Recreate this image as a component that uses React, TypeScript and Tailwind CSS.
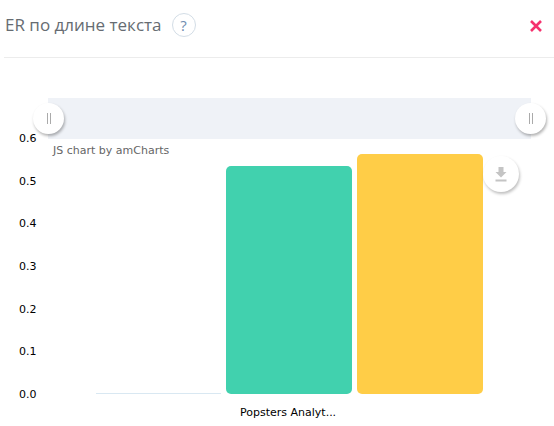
export default function App() {
  const ticks = ["0.6", "0.5", "0.4", "0.3", "0.2", "0.1", "0.0"];
  return (
    <div className="w-[554px] h-[426px] bg-white overflow-hidden relative">
      <header className="h-[58px] ml-1 mr-0 border-b border-[#ececec] flex items-start">
        <h2 className="mt-[13px] ml-px text-[17px] leading-6 font-normal text-[#666c72] font-['Open_Sans',sans-serif]">ER по длине текста</h2>
        <span className="mt-[13px] ml-[10px] w-6 h-6 rounded-full border border-[#d3dde6] text-[#6f8cb0] text-[15px] leading-[22px] text-center font-['Open_Sans',sans-serif]">?</span>
        <svg className="ml-auto mt-[20px] mr-[12px]" width="12" height="12" viewBox="0 0 12 12">
          <path d="M1 1 L11 11 M11 1 L1 11" stroke="#f5326e" strokeWidth="2.6" />
        </svg>
      </header>

      <div className="mt-10 ml-12 mr-[23px] h-[41px] bg-[#eff2f7]" />

      <div className="relative flex h-[255px] mt-0 font-['DejaVu_Sans',sans-serif] text-[11px]">
        <div className="w-[38px] h-[255px] -mt-[0px] relative">
          <div className="flex flex-col justify-between h-[270px] -mt-[7px] pl-[19px] leading-[14px] text-black">
            {ticks.map((t) => (
              <span key={t}>{t}</span>
            ))}
          </div>
        </div>
        <div className="flex items-end gap-[5px] ml-[58px] h-[255px]">
          <div className="w-[125px] h-px bg-[#d9e8f2]" />
          <div className="w-[126px] h-[228px] bg-[#41d1ae] rounded-[5px]" />
          <div className="w-[126px] h-[240px] bg-[#ffcd47] rounded-[5px]" />
        </div>
        <span className="absolute left-[53px] top-[5px] text-[#666] text-[11px] leading-[14px]">JS chart by amCharts</span>
        <span className="absolute left-[240px] top-[267px] text-black text-[11px] leading-[14px]">Popsters Analyt...</span>
      </div>

      <div className="absolute left-[33px] top-[103px] w-[31px] h-[31px] rounded-full bg-white shadow-[1px_2px_3px_rgba(0,0,0,0.3)] flex items-center justify-center gap-[2px]">
        <span className="w-px h-[11px] bg-[#aaa]" />
        <span className="w-px h-[11px] bg-[#aaa]" />
      </div>
      <div className="absolute left-[515px] top-[103px] w-[31px] h-[31px] rounded-full bg-white shadow-[1px_2px_3px_rgba(0,0,0,0.3)] flex items-center justify-center gap-[2px]">
        <span className="w-px h-[11px] bg-[#aaa]" />
        <span className="w-px h-[11px] bg-[#aaa]" />
      </div>
      <div className="absolute left-[483px] top-[156px] w-9 h-9 rounded-full bg-white shadow-[1px_2px_3px_rgba(0,0,0,0.25)] flex items-center justify-center">
        <svg width="12" height="15" viewBox="0 0 12 15">
          <path d="M3.5 0 H8.5 V5 H11.5 L6 10.5 L0.5 5 H3.5 Z" fill="#c4c4c4" />
          <rect x="0.5" y="12.5" width="11" height="2" fill="#c4c4c4" />
        </svg>
      </div>
    </div>
  );
}
